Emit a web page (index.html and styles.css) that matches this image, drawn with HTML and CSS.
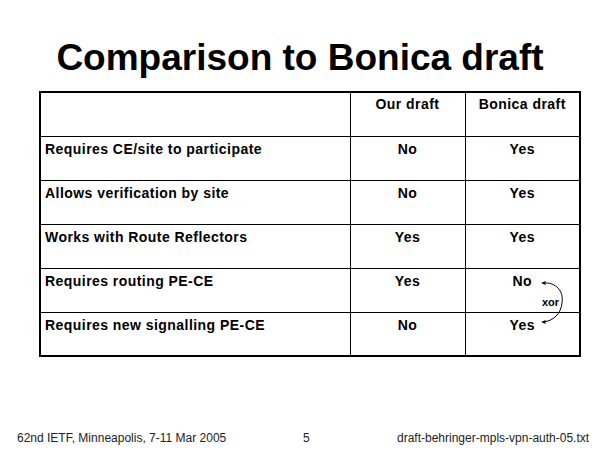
FILE: index.html
```html
<!DOCTYPE html>
<html>
<head>
<meta charset="utf-8">
<link rel="stylesheet" href="styles.css">
</head>
<body>
<div class="slide">
  <h1 class="title">Comparison to Bonica draft</h1>
  <div class="table-wrap">
    <table class="cmp">
      <colgroup>
        <col class="c1"><col class="c2"><col class="c3">
      </colgroup>
      <tr class="head"><td></td><td class="mid">Our draft</td><td class="mid">Bonica draft</td></tr>
      <tr><td>Requires CE/site to participate</td><td class="mid">No</td><td class="mid">Yes</td></tr>
      <tr><td>Allows verification by site</td><td class="mid">No</td><td class="mid">Yes</td></tr>
      <tr><td>Works with Route Reflectors</td><td class="mid">Yes</td><td class="mid">Yes</td></tr>
      <tr><td>Requires routing PE-CE</td><td class="mid">Yes</td><td class="mid">No</td></tr>
      <tr><td>Requires new signalling PE-CE</td><td class="mid">No</td><td class="mid">Yes</td></tr>
    </table>
    <svg class="xor-arrow" width="40" height="50" viewBox="0 0 40 50">
      <path d="M3 2 C 16 1, 24 10, 22 22 C 21 32, 14 40, 3 41" fill="none" stroke="#000" stroke-width="1"/>
      <path d="M1 2 L6 0 L5 2 L6 4 Z" fill="#000"/>
      <path d="M1 41 L6 39 L5 41 L6 43 Z" fill="#000"/>
    </svg>
    <span class="xor">xor</span>
  </div>
  <div class="spacer"></div>
  <div class="footer">
    <span class="f-left">62nd IETF, Minneapolis, 7-11 Mar 2005</span>
    <span class="f-mid">5</span>
    <span class="f-right">draft-behringer-mpls-vpn-auth-05.txt</span>
  </div>
</div>
</body>
</html>
```
FILE: styles.css
```css
html, body {
  margin: 0;
  padding: 0;
  background: #fff;
}
.slide {
  width: 600px;
  height: 450px;
  display: flex;
  flex-direction: column;
  font-family: "Liberation Sans", Arial, sans-serif;
  color: #000;
}
.title {
  margin: 36px 0 0 0;
  height: 55px;
  font-size: 37px;
  line-height: 44px;
  font-weight: bold;
  text-align: center;
}
.table-wrap {
  position: relative;
  margin-left: 39px;
  width: 542px;
}
.cmp {
  border-collapse: collapse;
  width: 542px;
  table-layout: fixed;
  border: 2px solid #000;
  font-size: 14px;
  font-weight: bold;
  letter-spacing: 0.45px;
}
.c1 { width: 310px; }
.c2 { width: 115px; }
.c3 { width: 115px; }
.cmp td {
  border: 1px solid #000;
  height: 44px;
  padding: 4px 4px 0 4px;
  vertical-align: top;
  line-height: 16px;
  box-sizing: border-box;
}
.cmp tr.head td {
  padding-top: 3px;
  height: 44px;
}
.cmp td.mid {
  text-align: center;
}
.xor-arrow {
  position: absolute;
  left: 501px;
  top: 190px;
}
.xor {
  position: absolute;
  left: 503px;
  top: 205px;
  font-size: 11px;
  font-weight: bold;
  line-height: 12px;
}
.spacer {
  flex: 1;
}
.footer {
  display: flex;
  height: 19px;
  font-size: 12px;
  color: #222;
  line-height: 14px;
}
.f-left {
  margin-left: 17px;
  width: 286px;
}
.f-mid {
  width: 94px;
}
.f-right {
  margin-left: 0;
}
```
